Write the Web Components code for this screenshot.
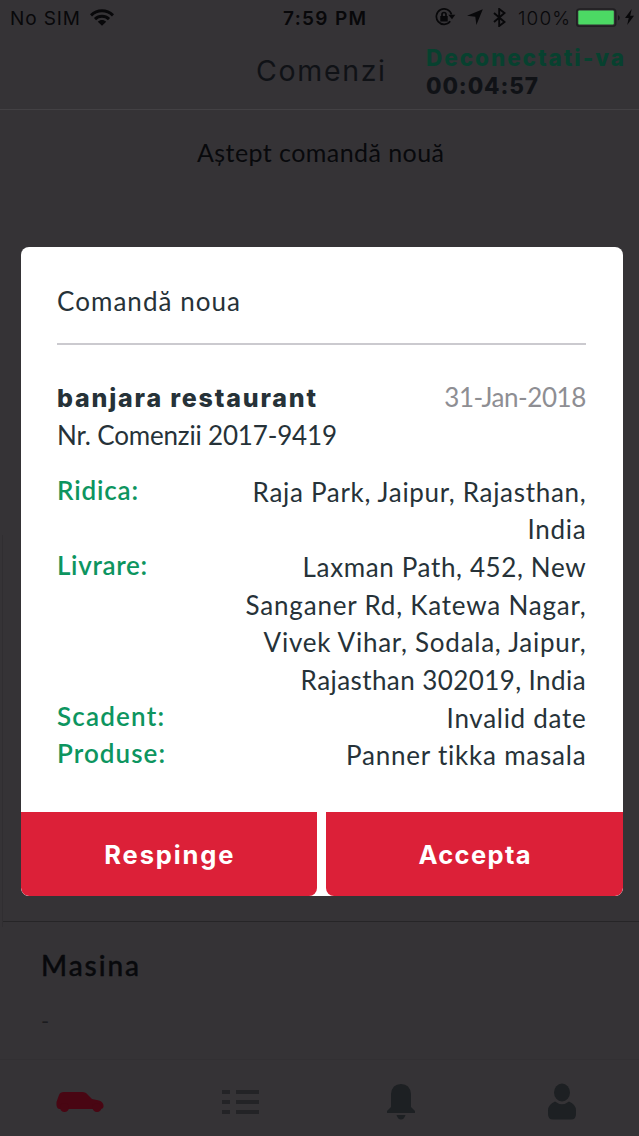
<!DOCTYPE html>
<html lang="ro">
<head>
<meta charset="utf-8">
<title>Comenzi</title>
<style>
html,body{margin:0;height:100%;background:#353336;overflow:hidden}
</style>
</head>
<body>
<orders-app></orders-app>
<script>
const define = (name, html, ready) => {
  const t = document.createElement('template');
  t.innerHTML = html;
  customElements.define(name, class extends HTMLElement {
    connectedCallback() {
      if (this.shadowRoot) return;
      this.attachShadow({ mode: 'open' }).append(t.content.cloneNode(true));
      if (ready) ready(this, this.shadowRoot);
    }
  });
};

/* One line of text, tracked so that it spans the width given in "w". */
define('fit-text', `
<style>:host{display:block;white-space:nowrap}span{display:inline-block}</style><span><slot></slot></span>`,
(el, root) => {
  const span = root.querySelector('span');
  const n = el.textContent.length;
  const w = parseFloat(el.getAttribute('w'));
  const ls = (w - span.getBoundingClientRect().width) / Math.max(1, n - 1);
  span.style.letterSpacing = ls + 'px';
  span.style.marginRight = -ls + 'px';
});

define('status-bar', `
<style>
:host{display:flex;height:36px;position:relative;font:400 19px/37px Inter,sans-serif;color:#08080a;box-sizing:border-box;padding:0 5px 0 10px}
.side{flex:1;display:flex;align-items:center}
.right{justify-content:flex-end}
.time{font-weight:600}
svg{display:block;flex:none}
fit-text{flex:none}
</style>
<div class="side"><fit-text w="70">No SIM</fit-text>
<svg style="margin-left:10px;margin-top:-2px" width="24" height="17" viewBox="0 0 24 17" fill="none" stroke="#08080a" stroke-width="3"><path d="M1 6.3C7.3.2 16.7.2 23 6.3M5 10.2c4-3.8 10-3.8 14 0"/><path d="M12 16.7 7.8 12.7c2.4-2.2 6-2.2 8.400 0z" fill="#08080a" stroke="none"/></svg></div>
<fit-text class="time" w="83" style="margin-left:5px">7:59 PM</fit-text>
<div class="side right">
<svg style="margin-right:11px;margin-top:-2px" width="21" height="18" viewBox="0 0 21 18" fill="none" stroke="#08080a" stroke-width="1.7"><path d="M15.200 13.300A7.700 7.700 0 1 1 16.500 6.500"/><path d="M13.300 6.800h7l-3.300 4.500z" fill="#08080a" stroke="none"/><path d="M5.300 8h7.400v5.500H5.300z" fill="#08080a" stroke="none"/><path d="M7 8.500V6.500a2 2 0 0 1 4 0v2"/></svg>
<svg style="margin-right:10px;margin-top:-2px" width="16" height="16" viewBox="0 0 16 16"><path d="M15.800.2 9.400 16 8.300 7.800 0 6.800z" fill="#08080a"/></svg>
<svg style="margin-right:12px;margin-top:-2px" width="13" height="19" viewBox="0 0 13 19" fill="none" stroke="#08080a" stroke-width="1.9"><path d="m1 5 10.500 9-5.300 4V1l5.300 4L1 14"/></svg>
<fit-text w="52" style="font-weight:300">100%</fit-text>
<svg style="margin-left:6px;margin-top:-1px" width="44" height="20" viewBox="0 0 44 20"><rect x=".7" y="1" width="39" height="17.300" rx="3" fill="none" stroke="#201f22" stroke-width="1.6"/><rect x="2.300" y="2.600" width="35.500" height="14" rx="1" fill="#4cd964"/><path d="M42 7v5.500q1.800-.8 1.800-2.700T42 7" fill="#19181b"/></svg>
<svg style="margin-left:5px;margin-top:-2px" width="9" height="16" viewBox="0 0 9 16"><path d="M6.700 0 0 9h3.700L2.200 16 9 6.700H5.200z" fill="#08080a"/></svg>
</div>`);

define('nav-header', `
<style>
:host{display:grid;grid-template-columns:256px 171px 1fr;height:73px;border-bottom:1px solid #434144;color:#101216}
.title{grid-column:2;font:400 28.5px/36px Inter,sans-serif;padding-top:17px}
.out{font:800 22.5px/28px Inter,sans-serif;padding-top:8px;margin-left:-1px}
.go{color:#07412f}
</style>
<fit-text class="title" w="129">Comenzi</fit-text>
<div class="out"><fit-text class="go" w="198">Deconectati-va</fit-text><fit-text w="112">00:04:57</fit-text></div>`);

define('detail-row', `
<style>
:host{display:flex;justify-content:space-between}
.label{font-weight:600;color:#0d955f;position:relative;top:-2px}
.value{text-align:right;margin-right:.7px}
</style>
<div class="label"><slot name="label"></slot></div><div class="value"><slot></slot></div>`);

define('action-button', `
<style>
:host{display:flex;flex:1;justify-content:center;height:84px;border-radius:0 0 8px 8px;background:#dc2038;color:#fff;font:700 25.5px/85px Inter,sans-serif}
</style><slot></slot>`);

define('order-dialog', `
<style>
:host{display:block;position:absolute;left:20.5px;top:246.7px;width:602.3px;height:649.8px;box-sizing:border-box;background:#fff;border-radius:8px;overflow:hidden;color:#263238;font:400 26px/37.67px Lato,sans-serif}
.body{height:565.5px;box-sizing:border-box;padding:36.2px 36.5px 0}
.rule{height:2px;background:#cbcacf;margin:22px 0 34.1px}
.head{display:flex;justify-content:space-between;align-items:baseline;height:37.67px}
.name{font:800 25px/37.67px Inter,sans-serif}
.date{color:#8e8e93}
.rows{margin-top:19.7px}
.actions{display:flex;gap:9px}
</style>
<div class="body">
<fit-text w="183">Comandă noua</fit-text>
<div class="rule"></div>
<div class="head"><fit-text class="name" w="259">banjara restaurant</fit-text><fit-text class="date" w="142">31-Jan-2018</fit-text></div>
<fit-text w="280" style="position:relative;top:.5px">Nr. Comenzii 2017-9419</fit-text>
<div class="rows">
<detail-row><fit-text slot="label" w="81">Ridica:</fit-text><fit-text w="333">Raja Park, Jaipur, Rajasthan,</fit-text><fit-text w="58">India</fit-text></detail-row>
<detail-row><fit-text slot="label" w="90">Livrare:</fit-text><fit-text w="283">Laxman Path, 452, New</fit-text><fit-text w="340">Sanganer Rd, Katewa Nagar,</fit-text><fit-text w="322">Vivek Vihar, Sodala, Jaipur,</fit-text><fit-text w="285">Rajasthan 302019, India</fit-text></detail-row>
<detail-row><fit-text slot="label" w="107">Scadent:</fit-text><fit-text w="139">Invalid date</fit-text></detail-row>
<detail-row><fit-text slot="label" w="108">Produse:</fit-text><fit-text w="240">Panner tikka masala</fit-text></detail-row>
</div></div>
<div class="actions"><action-button><fit-text w="129">Respinge</fit-text></action-button><action-button><fit-text w="112">Accepta</fit-text></action-button></div>`);

define('tab-bar', `
<style>
:host{display:grid;grid-template-columns:repeat(4,160.5px);height:76px;border-top:1px solid #323033;justify-items:center;align-items:center;box-sizing:border-box;padding-top:8px}
svg{display:block}
</style>
<svg width="48" height="22" viewBox="0 0 48 22" fill="#490613"><path d="M3 18Q0 17 .5 11L3 4Q4 1 8 1h18q4 0 6 3l4 4 7 1.500Q48 11 47.500 16q-.5 2-3 2z"/><circle cx="8.500" cy="16.500" r="4.500"/><circle cx="41" cy="16.500" r="4.500"/></svg>
<svg width="37" height="26" viewBox="0 0 37 26" fill="#232326"><path d="M0 1h8v4H0zM14 1h23v4H14zM0 11h8v4H0zM14 11h23v4H14zM0 21h8v4H0zM14 21h23v4H14z"/></svg>
<svg width="28" height="37" viewBox="0 0 28 37" fill="#1d2023"><path d="M4 24V11Q5 1 14 1t10 10v13l4 4v2H0v-2zM9.500 32h9Q17 36.500 14 36.500T9.500 32"/></svg>
<svg width="28" height="37" viewBox="0 0 28 37" fill="#1d2023"><ellipse cx="14" cy="9.500" rx="8" ry="9"/><path d="M7 18.500Q14 24 21 18.500q7 3 7 9V31q0 5.500-5 5.500H5Q0 36.500 0 31v-3.500q0-6 7-9"/></svg>`);

define('orders-app', `
<style>
:host{display:flex;flex-direction:column;position:relative;width:639px;height:1136px;background:#353336;color:#08090c;font-family:Lato,sans-serif;overflow:hidden}
.wait{font:400 25px/36px Lato;text-align:center;padding:24px 0 0 2px;height:785px;box-sizing:border-box}
.card{margin-left:3px;height:138px;border-top:1px solid #262527;box-sizing:border-box;padding:23px 38px 0}
.card fit-text{font:500 28px/40px Lato;-webkit-text-stroke:.4px}
.card .dash{font:400 22px/30px Lato;color:#1b1b1e;margin-top:21px}
.edge{position:absolute;left:2px;top:535px;height:392px;width:1px;background:#302e31}
</style>
<status-bar></status-bar><nav-header></nav-header>
<div class="wait"><fit-text w="247">Aștept comandă nouă</fit-text></div>
<div class="edge"></div>
<div style="height:26px"></div>
<div class="card"><fit-text w="98">Masina</fit-text><div class="dash">-</div></div>
<tab-bar></tab-bar>
<order-dialog></order-dialog>`);
</script>
</body>
</html>
